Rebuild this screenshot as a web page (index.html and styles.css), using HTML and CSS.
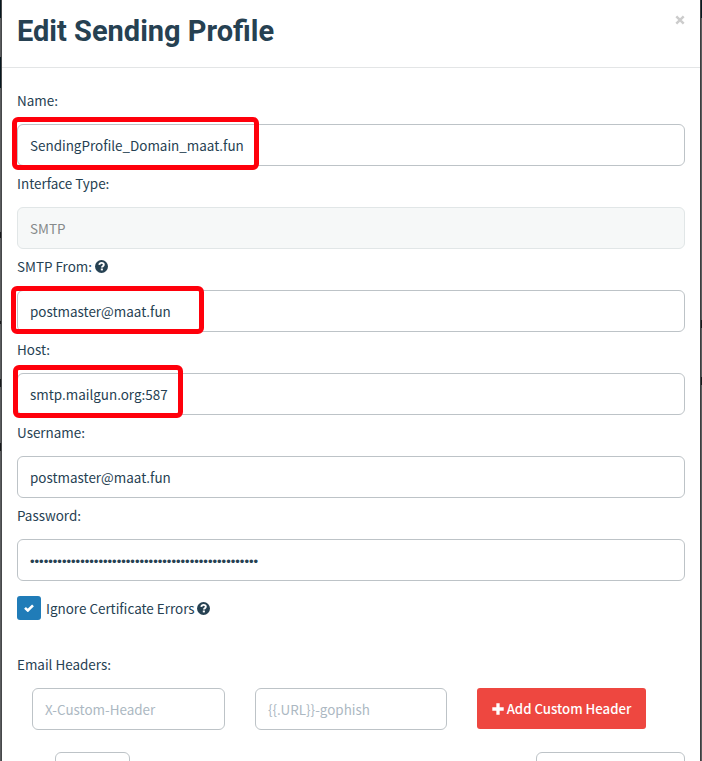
FILE: index.html
```html
<!DOCTYPE html>
<html lang="en">
<head>
<meta charset="utf-8">
<title>Edit Sending Profile</title>
<link rel="stylesheet" href="styles.css">
</head>
<body>
<svg width="0" height="0" class="defs">
  <symbol id="help" viewBox="0 0 13 13"><circle cx="6.5" cy="6.5" r="6.5" fill="#264152"/><path d="M4.3 4.9C4.5 3.5 5.3 2.9 6.6 2.9c1.2 0 2.2.7 2.2 1.8 0 1.5-1.9 1.4-1.9 2.9" fill="none" stroke="#fff" stroke-width="1.9"/><path d="M5.8 8.5h2.1v1.9H5.8z" fill="#fff"/></symbol>
</svg>
<div class="page">
  <div class="edge left"><i class="nav"></i><i class="mid"></i><i class="nav item"></i><i class="m m1"></i><i class="m m2"></i><i class="m m3"></i><i class="m m4"></i></div>
  <main class="modal">
    <header class="head"><h1>Edit Sending Profile</h1>
      <svg class="close" viewBox="0 0 10 10"><path d="M1.3 1.3l7.4 7.4M8.7 1.3L1.3 8.7" stroke="#ccc" stroke-width="2.4"/></svg>
    </header>
    <form class="body">
      <div class="group"><label><span>Name:</span></label><div class="field"><span>SendingProfile_Domain_maat.fun</span><b class="mark name"></b></div></div>
      <div class="group"><label><span>Interface Type:</span></label><div class="field disabled"><span>SMTP</span></div></div>
      <div class="group"><label><span>SMTP From:</span><svg class="help"><use href="#help"/></svg></label><div class="field"><span>postmaster@maat.fun</span><b class="mark from"></b></div></div>
      <div class="group"><label><span>Host:</span></label><div class="field"><span>smtp.mailgun.org:587</span><b class="mark host"></b></div></div>
      <div class="group"><label><span>Username:</span></label><div class="field"><span>postmaster@maat.fun</span></div></div>
      <div class="group"><label><span>Password:</span></label><div class="field secret"><span class="dots">••••••••••••••••••••••••••••••••••••••••••••••••••</span></div></div>
      <div class="check"><span class="box"><svg viewBox="0 0 10 8"><path d="M1 3.9l2.8 2.6L9 1.3" fill="none" stroke="#fff" stroke-width="2.6"/></svg></span><span>Ignore Certificate Errors</span><svg class="help"><use href="#help"/></svg></div>
      <label class="headers"><span>Email Headers:</span></label>
      <div class="row">
        <div class="field hint"><span>X-Custom-Header</span></div>
        <div class="field hint value"><span>{{.URL}}-gophish</span></div>
        <div class="button"><svg viewBox="0 0 12 12"><path d="M6 .3v11.4M.3 6h11.4" stroke="#fff" stroke-width="3.3"/></svg><span>Add Custom Header</span></div>
      </div>
      <div class="table"><div class="field length"></div><div class="field search"></div></div>
    </form>
  </main>
  <div class="edge right"><i class="nav"></i><i class="m m5"></i><i class="m m6"></i></div>
</div>
</body>
</html>
```
FILE: styles.css
```css
* { box-sizing: border-box; }
body { margin: 0; background: #fff; overflow: hidden; color: #264152; font: 13.44px/20px "Noto Sans CJK SC", "Noto Sans", sans-serif; }
.defs { position: absolute; }
.page { display: flex; width: 702px; height: 761px; overflow: hidden; }
.edge { position: relative; background: #5b5c5e; overflow: hidden; }
.left { width: 2px; border-right: 1px solid #46484a; }
.right { width: 2px; border-left: 1px solid #3c3e40; }
.edge i { display: block; height: 18px; }
.edge .nav { background: #07171f; }
.edge .mid { height: 39px; }
.edge .item { height: 31px; }
.edge .m { position: absolute; width: 2px; left: 0; height: 3px; background: #17191b; }
.edge .m1 { top: 232px; height: 6px; }
.edge .m2 { top: 321px; }
.edge .m3 { top: 379px; height: 8px; }
.edge .m4 { top: 443px; height: 8px; }
.edge .m5 { top: 320px; height: 8px; }
.edge .m6 { top: 377px; height: 8px; }
.modal { width: 698px; height: 761px; background: #fff; overflow: hidden; }
.head { display: flex; justify-content: space-between; height: 68px; padding: 13px 15px 0; border-bottom: 1px solid #e3e5e6; }
h1 { margin: 0; font: 700 29px/36px Roboto, sans-serif; white-space: nowrap; }
.close { width: 10px; height: 10px; margin-top: 2px; }
.body { margin: 0; padding: 22px 15px 0; }
.group { height: 83px; }
label { display: flex; align-items: center; height: 20px; gap: 3px; white-space: nowrap; }
.field { position: relative; display: flex; align-items: center; height: 42px; padding: 0 12px 1px; border: 1px solid #bdc3c7; border-radius: 6px; white-space: nowrap; }
.group .field { margin-top: 14px; }
.disabled { background: #f6f8f8; border-color: #e1e6e7; color: #868a8b; }
.help { width: 13px; height: 13px; }
.mark { position: absolute; border: 5px solid #ff000b; border-radius: 6px; }
.name { left: -6px; top: -8px; width: 247px; height: 53px; }
.from { left: -7px; top: -5px; width: 193px; height: 48px; }
.host { left: -5px; top: -9px; width: 170px; height: 53px; }
.secret { padding: 3px 12px 0; }
.dots { font-family: "Liberation Sans", sans-serif; font-size: 13px; letter-spacing: 0.01px; }
.check { display: flex; align-items: center; height: 24px; margin-top: 8px; }
.box { display: flex; align-items: center; justify-content: center; width: 24px; height: 24px; margin-right: 5px; border-radius: 3px; background: #207cb8; }
.box svg { width: 10px; height: 8px; }
.check .help { margin-left: 2px; }
.headers { margin-top: 34px; }
.row { display: flex; margin: 14px 0 0 15px; }
.row .field { width: 193px; }
.row .value { width: 192px; margin: 0 30px; }
.hint { color: #acb8c2; }
.button { display: flex; align-items: center; justify-content: center; gap: 3px; width: 169px; height: 41px; padding-top: 1px; border-radius: 3px; background: #ee4740; color: #fff; font-size: 13.2px; font-weight: 500; white-space: nowrap; }
.button svg { width: 12px; height: 12px; margin-bottom: 1px; }
.table { display: flex; justify-content: space-between; margin: 22px 0 0 38px; }
.length { width: 75px; }
.search { width: 149px; }
```
